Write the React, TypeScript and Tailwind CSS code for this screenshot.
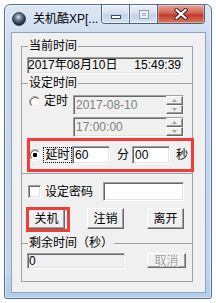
import React from "react";

const font = "font-['Liberation_Sans','Noto_Sans_CJK_SC',sans-serif]";
const sunken =
  "border border-t-[#a0a0a0] border-l-[#a0a0a0] border-r-white border-b-white shadow-[inset_1px_1px_0_#696969,inset_-1px_-1px_0_#e3e3e3]";
const raised =
  "border border-t-white border-l-white border-r-[#696969] border-b-[#696969] shadow-[inset_-1px_-1px_0_#a0a0a0]";

function Radio({ id, checked }: { id: string; checked?: boolean }) {
  return (
    <svg width="12" height="12" viewBox="0 0 12 12" className="shrink-0">
      <defs>
        <linearGradient id={id + "o"} x1="0" y1="0" x2="1" y2="1">
          <stop offset="0.5" stopColor="#a0a0a0" />
          <stop offset="0.5" stopColor="#ffffff" />
        </linearGradient>
        <linearGradient id={id + "i"} x1="0" y1="0" x2="1" y2="1">
          <stop offset="0.5" stopColor="#696969" />
          <stop offset="0.5" stopColor="#e3e3e3" />
        </linearGradient>
      </defs>
      <circle cx="6" cy="6" r="5.5" fill="none" stroke={`url(#${id}o)`} />
      <circle cx="6" cy="6" r="4.5" fill="#fff" stroke={`url(#${id}i)`} />
      {checked && <rect x="4" y="4" width="4" height="4" rx="1" fill="#000" />}
    </svg>
  );
}

function Spin() {
  return (
    <div className="ml-auto flex w-[17px] flex-col">
      {["up", "down"].map((d) => (
        <div
          key={d}
          className={`flex h-[9px] items-center justify-center bg-[#f0f0f0] ${raised}`}
        >
          <svg width="5" height="3" viewBox="0 0 5 3">
            {d === "up" ? (
              <path d="M0 3 L2.5 0 L5 3 Z" fill="#a0a0a0" />
            ) : (
              <path d="M0 0 L2.5 3 L5 0 Z" fill="#a0a0a0" />
            )}
          </svg>
        </div>
      ))}
    </div>
  );
}

function Group({
  label,
  className,
  children,
}: {
  label?: string;
  className: string;
  children: React.ReactNode;
}) {
  return (
    <div className={`relative w-[172px] border-[#a0a0a0] ${className}`}>
      {label && (
        <span className="absolute left-[6px] top-[-7px] whitespace-nowrap bg-[#f0f0f0] px-[1px] leading-[13px]">
          {label}
        </span>
      )}
      {children}
    </div>
  );
}

export default function App() {
  return (
    <div className={`h-[303px] w-[216px] whitespace-nowrap bg-white pl-[4px] pt-[4px] text-[12px] text-black ${font}`}>
      <div className="flex h-[295px] w-[208px] flex-col rounded-b-[3px] rounded-t-[6px] border border-[#566f8f] bg-[linear-gradient(#dce7f4,#c9daef_15%,#c2d5ed_90%,#b0cbec)] shadow-[inset_0_0_0_1px_rgba(255,255,255,0.55)]">
        {/* title bar */}
        <div className="flex h-[27px] items-start">
          <div className="flex h-[27px] items-center pl-[7px]">
            <svg width="14" height="14" viewBox="0 0 14 14">
              <defs>
                <radialGradient id="ic" cx="0.45" cy="0.35" r="0.7">
                  <stop offset="0" stopColor="#d8e2ec" />
                  <stop offset="0.35" stopColor="#6b7e94" />
                  <stop offset="0.8" stopColor="#1f2b3a" />
                </radialGradient>
              </defs>
              <circle cx="7" cy="7" r="6.5" fill="url(#ic)" stroke="#2a3442" strokeWidth="0.8" />
            </svg>
            <span className="ml-[7px] leading-[14px]">关机酷XP[...</span>
          </div>
          <div className="ml-auto mr-[6px] flex h-[19px] overflow-hidden rounded-b-[4px] border border-t-0 border-[#4e627d]">
            <div className="flex w-[27px] items-end justify-center bg-[linear-gradient(#eef3fa,#d4e0ef_45%,#c3d3e8_55%,#d3e1f2)] pb-[4px] shadow-[inset_0_0_0_1px_rgba(255,255,255,0.6)]">
              <div className="h-[4px] w-[10px] border border-[#39475a] bg-white" />
            </div>
            <div className="flex w-[28px] items-center justify-center border-l border-[#4e627d] bg-[linear-gradient(#eef3fa,#d4e0ef_45%,#c3d3e8_55%,#d3e1f2)] shadow-[inset_0_0_0_1px_rgba(255,255,255,0.6)]">
              <div className="flex h-[9px] w-[10px] items-center justify-center border border-[#8d9bb0] bg-[#eef2f8]">
                <div className="h-[3px] w-[4px] border border-[#a7b3c4]" />
              </div>
            </div>
            <div className="flex w-[47px] items-center justify-center border-l border-[#4e627d] bg-[linear-gradient(#e8a898,#d4604f_45%,#c23a2a_55%,#d87a62)] shadow-[inset_0_0_0_1px_rgba(255,255,255,0.35)]">
              <svg width="14" height="12" viewBox="0 0 14 12">
                <path d="M2.5 2 L11.5 10 M11.5 2 L2.5 10" stroke="#3b2020" strokeWidth="4" strokeLinecap="square" />
                <path d="M2.5 2 L11.5 10 M11.5 2 L2.5 10" stroke="#ffffff" strokeWidth="2.2" strokeLinecap="square" />
              </svg>
            </div>
          </div>
        </div>

        {/* client area */}
        <div className="ml-[6px] flex h-[261px] w-[195px] flex-col border border-[#8ea3bd] bg-[#f0f0f0] pl-[9px] pt-[13px]">
          <Group label="当前时间" className="h-[37px] border-l border-r border-t pl-[5px] pt-[10px]">
            <div className={`flex h-[17px] w-[157px] items-center justify-between bg-[#f0f0f0] pr-[2px] leading-[13px] ${sunken}`}>
              <span>2017年08月10日</span>
              <span>15:49:39</span>
            </div>
          </Group>

          <Group label="设定时间" className="h-[90px] border-l border-r border-t pt-[11px]">
            <div className="flex items-start pl-[7px]">
              <div className="mt-[1px]">
                <Radio id="r1" />
              </div>
              <span className="ml-[3px] leading-[13px]">定时</span>
              <div className="ml-[5px] flex flex-col gap-[2px]">
                <div className={`flex h-[20px] w-[111px] items-center bg-[#f0f0f0] pl-[2px] text-[#808080] ${sunken}`}>
                  <span>2017-08-10</span>
                  <Spin />
                </div>
                <div className={`flex h-[20px] w-[111px] items-center bg-[#f0f0f0] pl-[2px] text-[#808080] ${sunken}`}>
                  <span>17:00:00</span>
                  <Spin />
                </div>
              </div>
            </div>
            <div className="relative ml-[5px] mt-[1px] flex h-[34px] w-[167px] items-center pl-[2px]">
              <Radio id="r2" checked />
              <div className="ml-[2px] flex h-[16px] w-[29px] items-center justify-center border border-dotted border-black leading-[13px]">
                延时
              </div>
              <div className={`flex h-[18px] w-[38px] items-center bg-white pl-[2px] ${sunken}`}>60</div>
              <span className="ml-[7px]">分</span>
              <div className={`ml-[3px] flex h-[18px] w-[38px] items-center bg-white pl-[2px] ${sunken}`}>00</div>
              <span className="ml-[6px]">秒</span>
              <div className="pointer-events-none absolute inset-0 border-[3px] border-[#f23c3c]" />
            </div>
          </Group>

          <Group className="h-[70px] border-l border-r border-t pt-[8px]">
            <div className="flex items-center pl-[6px]">
              <div className={`h-[13px] w-[13px] bg-white ${sunken}`} />
              <span className="ml-[4px]">设定密码</span>
              <div className={`ml-[10px] h-[19px] w-[81px] bg-white ${sunken}`} />
            </div>
            <div className="mt-[7px] flex pl-[6px]">
              <div className="relative">
                <div className={`flex h-[21px] w-[37px] items-center justify-center bg-[#f0f0f0] ${raised}`}>关机</div>
                <div className="pointer-events-none absolute left-[-2px] top-[-1px] h-[25px] w-[44px] border-[3px] border-[#f23c3c]" />
              </div>
              <div className={`ml-[22px] flex h-[21px] w-[37px] items-center justify-center bg-[#f0f0f0] ${raised}`}>注销</div>
              <div className={`ml-[23px] flex h-[21px] w-[37px] items-center justify-center bg-[#f0f0f0] ${raised}`}>离开</div>
            </div>
          </Group>

          <Group label="剩余时间（秒）" className="flex h-[39px] items-start border pl-[5px] pt-[9px]">
            <div className={`flex h-[16px] w-[98px] items-center bg-[#f0f0f0] pl-[1px] ${sunken}`}>0</div>
            <div className={`ml-[22px] flex h-[15px] w-[39px] items-center justify-center bg-[#f0f0f0] text-[#a0a0a0] [text-shadow:1px_1px_0_#fff] ${raised}`}>
              取消
            </div>
          </Group>
        </div>
      </div>
    </div>
  );
}
